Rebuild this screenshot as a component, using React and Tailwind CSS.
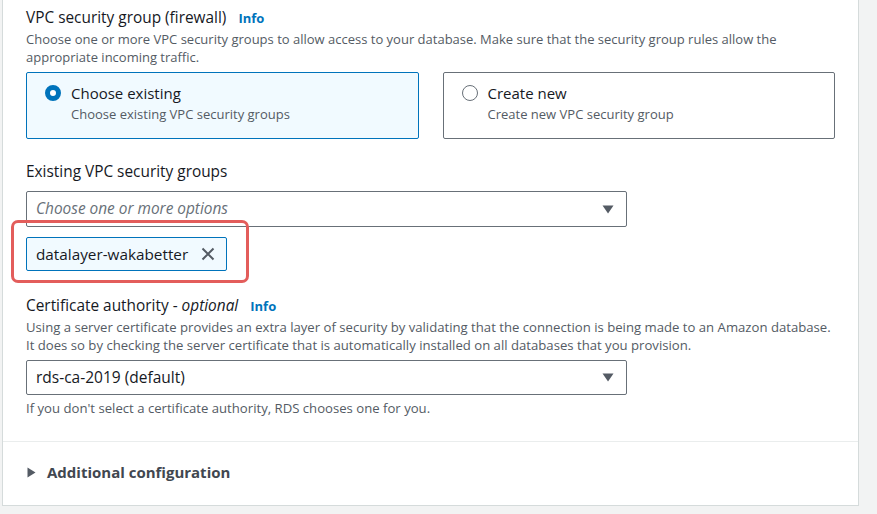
import React from "react";

function Caret() {
  return (
    <svg width="12" height="9" viewBox="0 0 12 9" className="shrink-0">
      <path d="M0.5 0.5 L11.5 0.5 L6 8.5 Z" fill="#545b64" />
    </svg>
  );
}

function Radio({ checked }) {
  if (checked) {
    return (
      <span className="w-[16px] h-[16px] rounded-full border-[5px] border-[#0073bb] bg-white shrink-0" />
    );
  }
  return (
    <span className="w-[16px] h-[16px] rounded-full border-[1.5px] border-[#687078] bg-white shrink-0" />
  );
}

function Tile({ checked, title, sub }) {
  return (
    <div
      className={
        "h-[67px] rounded-[2px] border pl-[18px] pt-[10px] flex gap-[10px] " +
        (checked ? "border-[#0073bb] bg-[#f1faff]" : "border-[#687078] bg-white")
      }
    >
      <div className="h-[20px] flex items-center">
        <Radio checked={checked} />
      </div>
      <div>
        <div className="text-[15px] leading-[20px] text-[#16191f]">{title}</div>
        <div className="text-[13px] leading-[20px] text-[#545b64] mt-[1px]">{sub}</div>
      </div>
    </div>
  );
}

export default function App() {
  return (
    <div className="w-[877px] h-[514px] bg-[#f2f3f3] overflow-hidden font-['Open_Sans',sans-serif]">
      <div className="ml-[2px] w-[857px] h-[506px] bg-white border border-t-0 border-[#d5dbdb] flex flex-col">
        <div className="px-[23px] pt-[8px]">
          <div className="flex items-baseline gap-[12px] leading-[20px]">
            <span className="text-[15.4px] text-[#16191f]">VPC security group (firewall)</span>
            <span className="text-[13px] font-bold text-[#0073bb]">Info</span>
          </div>
          <div className="mt-[2px] text-[13px] leading-[18px] text-[#545b64]">
            Choose one or more VPC security groups to allow access to your database. Make sure that the security group rules allow the appropriate incoming traffic.
          </div>
          <div className="mt-[6px] grid grid-cols-2 gap-[24px]">
            <Tile checked title="Choose existing" sub="Choose existing VPC security groups" />
            <Tile title="Create new" sub="Create new VPC security group" />
          </div>

          <div className="mt-[23px] text-[15.4px] leading-[20px] text-[#16191f]">
            Existing VPC security groups
          </div>
          <div className="mt-[9px] w-[601px] h-[36px] border border-[#687078] rounded-[2px] flex items-center justify-between pl-[9px] pr-[12px]">
            <span className="text-[15.4px] italic text-[#687078]">Choose one or more options</span>
            <Caret />
          </div>
          <div className="relative mt-[10px] w-[201px] h-[34px] border border-[#0073bb] bg-[#f1faff] rounded-[2px] flex items-center pl-[9px] gap-[13px]">
            <span className="text-[15.3px] text-[#16191f]">datalayer-wakabetter</span>
            <svg width="14" height="14" viewBox="0 0 14 14">
              <path d="M1.5 1.5 L12.5 12.5 M12.5 1.5 L1.5 12.5" stroke="#545b64" strokeWidth="2" />
            </svg>
            <div className="absolute left-[-16px] top-[-18px] w-[238px] h-[63px] border-[3px] border-[#e35d5b] rounded-[7px] pointer-events-none" />
          </div>

          <div className="mt-[25px] flex items-baseline gap-[12px] leading-[20px]">
            <span className="text-[15.4px] text-[#16191f]">
              Certificate authority - <i>optional</i>
            </span>
            <span className="text-[13px] font-bold text-[#0073bb]">Info</span>
          </div>
          <div className="mt-[2px] text-[13.15px] leading-[18px] text-[#545b64]">
            Using a server certificate provides an extra layer of security by validating that the connection is being made to an Amazon database.
            <br />
            It does so by checking the server certificate that is automatically installed on all databases that you provision.
          </div>
          <div className="mt-[6px] w-[601px] h-[35px] border border-[#687078] rounded-[2px] flex items-center justify-between pl-[9px] pr-[12px]">
            <span className="text-[15.5px] text-[#16191f]">rds-ca-2019 (default)</span>
            <Caret />
          </div>
          <div className="mt-[4px] text-[13.15px] leading-[18px] text-[#545b64]">
            If you don't select a certificate authority, RDS chooses one for you.
          </div>
        </div>
        <div className="mt-[24px] border-t border-[#eaeded]" />
        <div className="px-[24px] pt-[20px] flex items-center gap-[11px]">
          <svg width="9" height="11" viewBox="0 0 9 11">
            <path d="M0.5 0.5 L8.5 5.5 L0.5 10.5 Z" fill="#545b64" />
          </svg>
          <span className="text-[15px] font-bold text-[#414750] leading-[20px]">Additional configuration</span>
        </div>
      </div>
    </div>
  );
}
